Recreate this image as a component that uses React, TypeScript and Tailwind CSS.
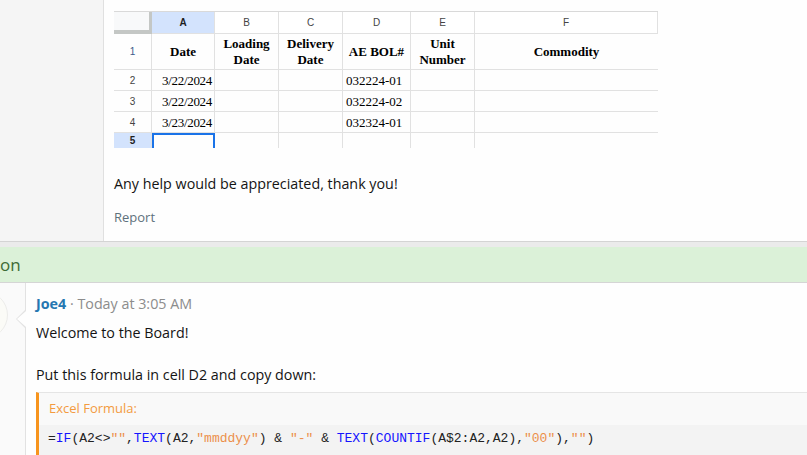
import React from 'react'

const cols = ['A', 'B', 'C', 'D', 'E', 'F']
const colW = ['w-[63px]', 'w-[64px]', 'w-[64px]', 'w-[68px]', 'w-[64px]', 'w-[183px]']

const rows = [
  { n: '2', date: '3/22/2024', bol: '032224-01' },
  { n: '3', date: '3/22/2024', bol: '032224-02' },
  { n: '4', date: '3/23/2024', bol: '032324-01' },
]

function Sheet() {
  return (
    <div className="w-[544px] border-t border-[#d9d9d9] text-[#000] font-['Liberation_Serif','Times_New_Roman',serif]">
      {/* column header row */}
      <div className="flex h-[22px]">
        <div className="w-[38px] h-[22px] bg-[#f8f9fa] border-r-[3px] border-b-[4px] border-[#c4c7c5]" />
        {cols.map((c, i) => (
          <div
            key={c}
            className={`${colW[i]} flex items-center justify-center border-r border-b border-[#e1e1e1] text-[10px] font-['Liberation_Sans',Arial,sans-serif] ${
              i === 0 ? 'bg-[#d3e3fd] text-[#1f1f1f] font-bold' : 'bg-white text-[#444]'
            }`}
          >
            {c}
          </div>
        ))}
      </div>

      {/* row 1 - headers */}
      <div className="flex h-[36px] text-[13px] font-bold leading-[16px] text-center">
        <div className="w-[38px] flex items-center justify-center border-r border-b border-[#e1e1e1] text-[10px] font-normal text-[#3c5a8a] font-['Liberation_Sans',Arial,sans-serif]">1</div>
        <div className="w-[63px] flex items-center justify-center border-r border-b border-[#e1e1e1]">Date</div>
        <div className="w-[64px] flex items-center justify-center border-r border-b border-[#e1e1e1]">Loading<br />Date</div>
        <div className="w-[64px] flex items-center justify-center border-r border-b border-[#e1e1e1]">Delivery<br />Date</div>
        <div className="w-[68px] flex items-center justify-center border-r border-b border-[#e1e1e1]">AE BOL#</div>
        <div className="w-[64px] flex items-center justify-center border-r border-b border-[#e1e1e1]">Unit<br />Number</div>
        <div className="w-[183px] flex items-center justify-center border-b border-[#e1e1e1]">Commodity</div>
      </div>

      {rows.map((r) => (
        <div key={r.n} className="flex h-[21px]">
          <div className="w-[38px] flex items-center justify-center border-r border-b border-[#e1e1e1] text-[10px] text-[#444] font-['Liberation_Sans',Arial,sans-serif]">{r.n}</div>
          <div className="w-[63px] flex items-center justify-end pr-[2px] pt-[2px] border-r border-b border-[#e1e1e1] text-[13px] tracking-[-0.3px]">{r.date}</div>
          <div className="w-[64px] border-r border-b border-[#e1e1e1]" />
          <div className="w-[64px] border-r border-b border-[#e1e1e1]" />
          <div className="w-[68px] flex items-center pl-[3px] pt-[2px] border-r border-b border-[#e1e1e1] text-[13px]">{r.bol}</div>
          <div className="w-[64px] border-r border-b border-[#e1e1e1]" />
          <div className="w-[183px] border-b border-[#e1e1e1]" />
        </div>
      ))}

      {/* row 5 - partially cut */}
      <div className="flex h-[15px]">
        <div className="w-[38px] flex items-end justify-center bg-[#d3e3fd] border-r border-[#e1e1e1] text-[10px] font-bold text-[#1f1f1f] font-['Liberation_Sans',Arial,sans-serif]">5</div>
        <div className="w-[63px] border-[2px] border-b-0 border-[#1a73e8]" />
        <div className="w-[64px] border-r border-[#e1e1e1]" />
        <div className="w-[64px] border-r border-[#e1e1e1]" />
        <div className="w-[68px] border-r border-[#e1e1e1]" />
        <div className="w-[64px] border-r border-[#e1e1e1]" />
        <div className="w-[183px]" />
      </div>
    </div>
  )
}

function Token({ t, c }: { t: string; c: 'k' | 's' | 'p' }) {
  const cls = c === 'k' ? 'text-[#1515ff]' : c === 's' ? 'text-[#ec8f4a]' : 'text-[#222]'
  return <span className={cls}>{t}</span>
}

const formula: [string, 'k' | 's' | 'p'][] = [
  ['=', 'p'], ['IF', 'k'], ['(A2<>', 'p'], ['""', 's'], [',', 'p'], ['TEXT', 'k'], ['(A2,', 'p'],
  ['"mmddyy"', 's'], [') & ', 'p'], ['"-"', 's'], [' & ', 'p'], ['TEXT', 'k'], ['(', 'p'],
  ['COUNTIF', 'k'], ['(A$2:A2,A2),', 'p'], ['"00"', 's'], ['),', 'p'], ['""', 's'], [')', 'p'],
]

export default function App() {
  return (
    <div className="w-[807px] h-[455px] overflow-hidden bg-[#fefefe] text-[#141414] font-['Segoe_UI','Open_Sans',sans-serif]">
      {/* first post */}
      <div className="flex h-[242px] border-b border-[#d4d4d4]">
        <div className="w-[104px] shrink-0 bg-[#f5f5f5] border-r border-[#e0e0e0]" />
        <div className="flex-1 pl-[10px] pt-[11px]">
          <Sheet />
          <p className="mt-[25px] text-[14.3px] leading-[22px]">Any help would be appreciated, thank you!</p>
          <p className="mt-[13px] text-[13px] leading-[18px] text-[#5e717c]">Report</p>
        </div>
      </div>
      <div className="h-[5px] bg-[#ebebeb]" />

      {/* solution bar */}
      <div className="h-[36px] bg-[#dbf1d8] border-b border-[#d5d5d5] flex items-center text-[17px] text-[#3d6b35]">
        on
      </div>

      {/* reply */}
      <div className="flex h-[200px]">
        <div className="relative w-[26px] shrink-0 bg-[#fafafa] border-r border-[#e2e2e2]">
          <div className="absolute -left-[40px] top-[8px] w-[48px] h-[48px] rounded-full bg-[#fbfbf7] border border-[#ececea]" />
          <div className="absolute left-[16px] top-[27px] w-0 h-0 border-y-[9px] border-y-transparent border-r-[9px] border-r-[#e2e2e2]" />
          <div className="absolute left-[17px] top-[28px] w-0 h-0 border-y-[8px] border-y-transparent border-r-[9px] border-r-[#fefefe]" />
        </div>
        <div className="flex-1 pl-[10px] pt-[11px]">
          <div className="text-[14.3px] leading-[20px]">
            <span className="font-bold text-[#2577b1]">Joe4</span>
            <span className="text-[#8c8c8c]"> · Today at 3:05 AM</span>
          </div>
          <p className="mt-[8px] text-[14.3px] leading-[22px]">Welcome to the Board!</p>
          <p className="mt-[20px] text-[14.3px] leading-[22px]">Put this formula in cell D2 and copy down:</p>
          <div className="mt-[6px] border-l-[3px] border-[#f7941d] border-t border-t-[#e5e5e5]">
            <div className="h-[32px] bg-[#f9f9f9] flex items-center pl-[10px] text-[13px] text-[#f39b3f]">
              Excel Formula:
            </div>
            <div className="h-[40px] bg-[#f3f3f3] pl-[9px] pt-[5px] text-[13px] leading-[18px] font-['Liberation_Mono','Courier_New',monospace] whitespace-pre">
              {formula.map(([t, c], i) => (
                <Token key={i} t={t} c={c} />
              ))}
            </div>
          </div>
        </div>
      </div>
    </div>
  )
}
